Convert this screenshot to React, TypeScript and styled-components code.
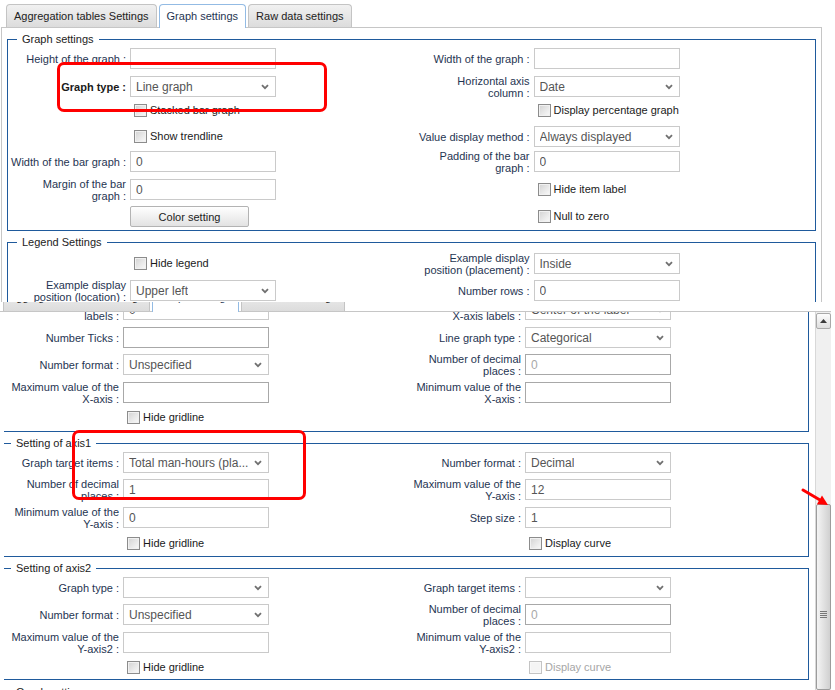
import styled, { createGlobalStyle } from 'styled-components';
import type { ReactNode } from 'react';

const FONT = '"Liberation Sans", Arial, Helvetica, sans-serif';

// label column widths (upper view / scrolled lower view)
const TOP_LW = 118;
const LOW_LW = 115;

const GlobalStyle = createGlobalStyle`
  html, body { margin: 0; padding: 0; background: #ffffff; }
  body { font-family: ${FONT}; }
  * { box-sizing: border-box; }
`;

const Page = styled.div`
  position: relative;
  width: 835px;
  height: 690px;
  overflow: hidden;
  background: #ffffff;
  font-family: ${FONT};
`;

const TopPane = styled.div`
  height: 302px;
  overflow: hidden;
`;

const TabBar = styled.div<{ $width: number; $left: number; $pad: number }>`
  display: flex;
  align-items: flex-end;
  gap: 2px;
  height: 28px;
  width: ${(p) => p.$width}px;
  margin-left: ${(p) => p.$left}px;
  padding-left: ${(p) => p.$pad}px;
  border-bottom: 1px solid #c6c6c6;
`;

const Tab = styled.div<{ $active?: boolean; $pad?: number; $lh?: number }>`
  height: ${(p) => (p.$active ? 24 : 23)}px;
  margin-bottom: ${(p) => (p.$active ? -1 : 0)}px;
  padding: 0 ${(p) => p.$pad ?? 7}px;
  border: 1px solid ${(p) => (p.$active ? '#93bbe4' : '#c4c4c4')};
  border-bottom: none;
  border-radius: 4px 4px 0 0;
  background: ${(p) => (p.$active ? '#ffffff' : 'linear-gradient(#f1f1f1, #dcdcdc)')};
  font-size: 11px;
  line-height: ${(p) => p.$lh ?? 22}px;
  color: ${(p) => (p.$active ? '#1f3552' : '#222222')};
  white-space: nowrap;
`;

const Panel = styled.div`
  width: 821px;
  margin-left: 1px;
  padding: 5px 5px 0;
  border: 1px solid #c6c6c6;
  border-top: none;
  height: 300px;
`;

const Fieldset = styled.fieldset<{ $mt: number; $pb: number; $open?: boolean; $cut?: boolean }>`
  margin: ${(p) => p.$mt}px 0 0;
  padding: 0 0 ${(p) => p.$pb}px;
  min-width: 0;
  border: 1px solid #1f5a9c;
  ${(p) => (p.$open ? 'border-left: none;' : '')}
  ${(p) => (p.$cut ? 'border-top: none;' : '')}
`;

const Legend = styled.legend<{ $ml: number }>`
  margin-left: ${(p) => p.$ml}px;
  padding: 0 5px;
  font-size: 11px;
  line-height: 13px;
  color: #222222;
`;

const Row = styled.div<{ $mt: number }>`
  display: grid;
  grid-template-columns: 1fr 1fr;
  height: 21px;
  margin-top: ${(p) => p.$mt}px;
`;

const Cell = styled.div`
  display: flex;
  align-items: center;
  gap: 4px;
  height: 21px;
  min-width: 0;
`;

const Label = styled.div<{ $w: number; $bold?: boolean }>`
  flex: none;
  width: ${(p) => p.$w}px;
  text-align: right;
  white-space: nowrap;
  font-size: 11px;
  line-height: 12px;
  font-weight: ${(p) => (p.$bold ? 700 : 400)};
  color: ${(p) => (p.$bold ? '#1a1a1a' : '#1f3552')};
`;

const TextInput = styled.input<{ $dark?: boolean }>`
  flex: none;
  width: 146px;
  height: 21px;
  margin: 0;
  padding: 0 5px;
  border: 1px solid ${(p) => (p.$dark ? '#a8a8a8' : '#cacaca')};
  border-radius: 0;
  background: #ffffff;
  font-family: ${FONT};
  font-size: 12px;
  color: #555555;
  outline: none;
  &:disabled {
    color: #a8a8a8;
    background: #ffffff;
  }
`;

const SelectBox = styled.div`
  flex: none;
  display: flex;
  align-items: center;
  justify-content: space-between;
  gap: 4px;
  width: 146px;
  height: 21px;
  padding: 0 6px 0 5px;
  border: 1px solid #cacaca;
  background: #ffffff;
  font-size: 12px;
  color: #555555;
  white-space: nowrap;
  overflow: hidden;
`;

const SelectText = styled.span`
  overflow: hidden;
`;

const ChevronSvg = styled.svg`
  flex: none;
`;

const Check = styled.label<{ $disabled?: boolean }>`
  display: inline-flex;
  align-items: center;
  gap: 3px;
  margin-left: 4px;
  font-size: 11px;
  line-height: 13px;
  white-space: nowrap;
  color: ${(p) => (p.$disabled ? '#a6a6a6' : '#1a1a1a')};
`;

const Box = styled.span<{ $disabled?: boolean }>`
  flex: none;
  width: 13px;
  height: 13px;
  border: 1px solid ${(p) => (p.$disabled ? '#c4c4c4' : '#8c8c8c')};
  background: ${(p) =>
    p.$disabled ? '#f4f4f4' : 'linear-gradient(135deg, #d2d2d2 0%, #e9e9e9 55%, #fafafa 100%)'};
  box-shadow: inset 0 0 0 1px ${(p) => (p.$disabled ? '#f8f8f8' : '#f1f1f1')};
`;

const ActionButton = styled.button`
  flex: none;
  width: 119px;
  height: 21px;
  margin: 0;
  padding: 0;
  border: 1px solid #b3b3b3;
  border-radius: 2px;
  background: linear-gradient(#ffffff, #e2e2e2);
  font-family: ${FONT};
  font-size: 11px;
  color: #222222;
`;

const BottomPane = styled.div`
  position: relative;
  display: flex;
  height: 388px;
  overflow: hidden;
`;

const StripWrap = styled.div`
  position: absolute;
  top: 0;
  left: 0;
  z-index: 2;
  width: 831px;
  height: 10px;
  overflow: hidden;
  background: #ffffff;
`;

const StripBar = styled(TabBar)`
  margin-top: -18px;
`;

const ScrollArea = styled.div`
  flex: none;
  width: 815px;
  padding: 0 6px 0 4px;
  overflow: hidden;
`;

const ScrollBar = styled.div`
  flex: none;
  display: flex;
  flex-direction: column;
  width: 16px;
  margin-top: 10px;
  background: #f0f0f0;
  border-left: 1px solid #d8d8d8;
`;

const ScrollUp = styled.div`
  display: flex;
  align-items: center;
  justify-content: center;
  height: 16px;
  margin-top: 1px;
  border: 1px solid #a9a9a9;
  border-radius: 2px;
  background: linear-gradient(#fdfdfd, #dedede);
`;

const TrackGap = styled.div`
  flex: none;
  height: 175px;
`;

const Thumb = styled.div`
  flex: 1;
  display: flex;
  flex-direction: column;
  align-items: center;
  gap: 1px;
  padding-top: 106px;
  border: 1px solid #9c9c9c;
  border-radius: 2px;
  background: linear-gradient(90deg, #f4f4f4, #d0d0d0);
`;

const GripLine = styled.span`
  width: 7px;
  height: 1px;
  background: #777777;
`;

const Highlight = styled.div<{ $x: number; $y: number; $w: number; $h: number }>`
  position: absolute;
  left: ${(p) => p.$x}px;
  top: ${(p) => p.$y}px;
  width: ${(p) => p.$w}px;
  height: ${(p) => p.$h}px;
  z-index: 10;
  border: 3px solid #ff0000;
  border-radius: 7px;
  pointer-events: none;
`;

const ArrowMark = styled.svg`
  position: absolute;
  left: 798px;
  top: 484px;
  z-index: 10;
`;

const Chevron = () => (
  <ChevronSvg viewBox="0 0 8 6" width={8} height={6}>
    <polyline points="1,1.2 4,4.2 7,1.2" fill="none" stroke="#707070" strokeWidth="1.8" />
  </ChevronSvg>
);

const Select = ({ value = '' }: { value?: string }) => (
  <SelectBox>
    <SelectText>{value}</SelectText>
    <Chevron />
  </SelectBox>
);

const Field = ({ lw, label, bold, children }: { lw: number; label: ReactNode; bold?: boolean; children: ReactNode }) => (
  <Cell>
    <Label $w={lw} $bold={bold}>
      {label}
    </Label>
    {children}
  </Cell>
);

const CheckField = ({ lw, text, disabled }: { lw: number; text: string; disabled?: boolean }) => (
  <Cell>
    <Label $w={lw} />
    <Check $disabled={disabled}>
      <Box $disabled={disabled} />
      {text}
    </Check>
  </Cell>
);

const Tabs = ({ first = 7, lh }: { first?: number; lh?: number }) => (
  <>
    <Tab $pad={first} $lh={lh}>Aggregation tables Settings</Tab>
    <Tab $active $lh={lh}>Graph settings</Tab>
    <Tab $lh={lh}>Raw data settings</Tab>
  </>
);

const App = () => {
  return (
    <Page>
      <GlobalStyle />
      <TopPane>
        <TabBar $width={821} $left={1} $pad={5}>
          <Tabs />
        </TabBar>
        <Panel>
          <Fieldset $mt={0} $pb={3}>
            <Legend $ml={9}>Graph settings</Legend>
            <Row $mt={2}>
              <Field lw={TOP_LW} label="Height of the graph :">
                <TextInput readOnly defaultValue="" />
              </Field>
              <Field lw={TOP_LW} label="Width of the graph :">
                <TextInput readOnly defaultValue="" />
              </Field>
            </Row>
            <Row $mt={7}>
              <Field lw={TOP_LW} label="Graph type :" bold>
                <Select value="Line graph" />
              </Field>
              <Field lw={TOP_LW} label={<>Horizontal axis<br />column :</>}>
                <Select value="Date" />
              </Field>
            </Row>
            <Row $mt={3}>
              <CheckField lw={TOP_LW} text="Stacked bar graph" />
              <CheckField lw={TOP_LW} text="Display percentage graph" />
            </Row>
            <Row $mt={5}>
              <CheckField lw={TOP_LW} text="Show trendline" />
              <Field lw={TOP_LW} label="Value display method :">
                <Select value="Always displayed" />
              </Field>
            </Row>
            <Row $mt={4}>
              <Field lw={TOP_LW} label="Width of the bar graph :">
                <TextInput readOnly defaultValue="0" />
              </Field>
              <Field lw={TOP_LW} label={<>Padding of the bar<br />graph :</>}>
                <TextInput readOnly defaultValue="0" />
              </Field>
            </Row>
            <Row $mt={7}>
              <Field lw={TOP_LW} label={<>Margin of the bar<br />graph :</>}>
                <TextInput readOnly defaultValue="0" />
              </Field>
              <CheckField lw={TOP_LW} text="Hide item label" />
            </Row>
            <Row $mt={6}>
              <Field lw={TOP_LW} label="">
                <ActionButton type="button">Color setting</ActionButton>
              </Field>
              <CheckField lw={TOP_LW} text="Null to zero" />
            </Row>
          </Fieldset>

          <Fieldset $mt={5} $pb={3}>
            <Legend $ml={9}>Legend Settings</Legend>
            <Row $mt={4}>
              <CheckField lw={TOP_LW} text="Hide legend" />
              <Field lw={TOP_LW} label={<>Example display<br />position (placement) :</>}>
                <Select value="Inside" />
              </Field>
            </Row>
            <Row $mt={6}>
              <Field lw={TOP_LW} label={<>Example display<br />position (location) :</>}>
                <Select value="Upper left" />
              </Field>
              <Field lw={TOP_LW} label="Number rows :">
                <TextInput readOnly defaultValue="0" />
              </Field>
            </Row>
          </Fieldset>
        </Panel>
      </TopPane>

      <BottomPane>
        <StripWrap>
          <StripBar $width={831} $left={0} $pad={3}>
            <Tabs first={5} lh={17} />
          </StripBar>
        </StripWrap>

        <ScrollArea>
          <Fieldset $mt={-3} $pb={3} $open $cut>
            <Row $mt={0}>
              <Field lw={LOW_LW} label={<>Rotation angle of the<br />labels :</>}>
                <TextInput readOnly defaultValue="0" />
              </Field>
              <Field lw={LOW_LW} label={<>Display position of the<br />X-axis labels :</>}>
                <Select value="Center of the label" />
              </Field>
            </Row>
            <Row $mt={7}>
              <Field lw={LOW_LW} label="Number Ticks :">
                <TextInput readOnly defaultValue="" $dark />
              </Field>
              <Field lw={LOW_LW} label="Line graph type :">
                <Select value="Categorical" />
              </Field>
            </Row>
            <Row $mt={6}>
              <Field lw={LOW_LW} label="Number format :">
                <Select value="Unspecified" />
              </Field>
              <Field lw={LOW_LW} label={<>Number of decimal<br />places :</>}>
                <TextInput disabled defaultValue="0" $dark />
              </Field>
            </Row>
            <Row $mt={7}>
              <Field lw={LOW_LW} label={<>Maximum value of the<br />X-axis :</>}>
                <TextInput readOnly defaultValue="" $dark />
              </Field>
              <Field lw={LOW_LW} label={<>Minimum value of the<br />X-axis :</>}>
                <TextInput readOnly defaultValue="" $dark />
              </Field>
            </Row>
            <Row $mt={4}>
              <CheckField lw={LOW_LW} text="Hide gridline" />
              <Cell />
            </Row>
          </Fieldset>

          <Fieldset $mt={5} $pb={2} $open>
            <Legend $ml={7}>Setting of axis1</Legend>
            <Row $mt={2}>
              <Field lw={LOW_LW} label="Graph target items :">
                <Select value="Total man-hours (pla..." />
              </Field>
              <Field lw={LOW_LW} label="Number format :">
                <Select value="Decimal" />
              </Field>
            </Row>
            <Row $mt={6}>
              <Field lw={LOW_LW} label={<>Number of decimal<br />places :</>}>
                <TextInput readOnly defaultValue="1" />
              </Field>
              <Field lw={LOW_LW} label={<>Maximum value of the<br />Y-axis :</>}>
                <TextInput readOnly defaultValue="12" />
              </Field>
            </Row>
            <Row $mt={7}>
              <Field lw={LOW_LW} label={<>Minimum value of the<br />Y-axis :</>}>
                <TextInput readOnly defaultValue="0" />
              </Field>
              <Field lw={LOW_LW} label="Step size :">
                <TextInput readOnly defaultValue="1" />
              </Field>
            </Row>
            <Row $mt={5}>
              <CheckField lw={LOW_LW} text="Hide gridline" />
              <CheckField lw={LOW_LW} text="Display curve" />
            </Row>
          </Fieldset>

          <Fieldset $mt={5} $pb={1} $open>
            <Legend $ml={7}>Setting of axis2</Legend>
            <Row $mt={2}>
              <Field lw={LOW_LW} label="Graph type :">
                <Select />
              </Field>
              <Field lw={LOW_LW} label="Graph target items :">
                <Select />
              </Field>
            </Row>
            <Row $mt={6}>
              <Field lw={LOW_LW} label="Number format :">
                <Select value="Unspecified" />
              </Field>
              <Field lw={LOW_LW} label={<>Number of decimal<br />places :</>}>
                <TextInput disabled defaultValue="0" $dark />
              </Field>
            </Row>
            <Row $mt={7}>
              <Field lw={LOW_LW} label={<>Maximum value of the<br />Y-axis2 :</>}>
                <TextInput readOnly defaultValue="" />
              </Field>
              <Field lw={LOW_LW} label={<>Minimum value of the<br />Y-axis2 :</>}>
                <TextInput readOnly defaultValue="" />
              </Field>
            </Row>
            <Row $mt={4}>
              <CheckField lw={LOW_LW} text="Hide gridline" />
              <CheckField lw={LOW_LW} text="Display curve" disabled />
            </Row>
          </Fieldset>

          <Fieldset $mt={6} $pb={2} $open>
            <Legend $ml={7}>Graph settings</Legend>
            <Row $mt={2}>
              <Field lw={LOW_LW} label="Height of the graph :">
                <TextInput readOnly defaultValue="" />
              </Field>
              <Field lw={LOW_LW} label="Width of the graph :">
                <TextInput readOnly defaultValue="" />
              </Field>
            </Row>
          </Fieldset>
        </ScrollArea>

        <ScrollBar>
          <ScrollUp>
            <svg width="7" height="4" viewBox="0 0 7 4">
              <polygon points="0,4 3.5,0 7,4" fill="#3a3a3a" />
            </svg>
          </ScrollUp>
          <TrackGap />
          <Thumb>
            <GripLine />
            <GripLine />
            <GripLine />
            <GripLine />
          </Thumb>
        </ScrollBar>
      </BottomPane>

      <Highlight $x={57} $y={62} $w={270} $h={50} />
      <Highlight $x={72} $y={430} $w={234} $h={70} />
      <ArrowMark width="36" height="26" viewBox="0 0 36 26">
        <line x1="5" y1="6" x2="22" y2="16" stroke="#ff0000" strokeWidth="3" strokeLinecap="round" />
        <polygon points="30,21 18.9,20.2 24,11.6" fill="#ff0000" />
      </ArrowMark>
    </Page>
  );
};

export default App;
